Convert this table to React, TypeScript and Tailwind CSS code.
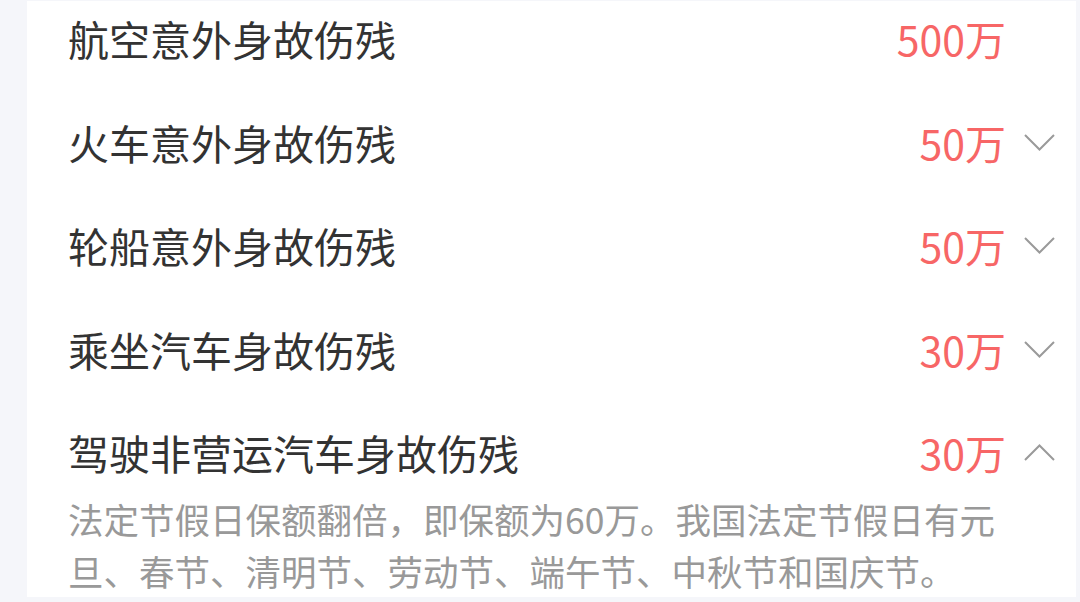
const rows = [
  { title: "航空意外身故伤残", amount: "500万", arrow: "none" },
  { title: "火车意外身故伤残", amount: "50万", arrow: "down" },
  { title: "轮船意外身故伤残", amount: "50万", arrow: "down" },
  { title: "乘坐汽车身故伤残", amount: "30万", arrow: "down" },
  { title: "驾驶非营运汽车身故伤残", amount: "30万", arrow: "up" },
];

const Chevron = ({ dir }: { dir: string }) => (
  <svg
    width="31"
    height="17"
    viewBox="0 0 31 17"
    className={dir === "none" ? "invisible" : ""}
  >
    <polyline
      points={dir === "up" ? "1,16 15.5,1.5 30,16" : "1,1 15.5,15.5 30,1"}
      fill="none"
      stroke="#9a9a9a"
      strokeWidth="2"
    />
  </svg>
);

export default function App() {
  return (
    <div
      className="h-[602px] w-[1080px] bg-[#f5f6fa] pl-[27px] pr-[4px] pt-px pb-[5px] flex"
      style={{ fontFamily: '"Noto Sans CJK SC", "Noto Sans", sans-serif' }}
    >
      <div className="flex-1 bg-white overflow-hidden pl-[41px] pr-[21px]">
        <div className="-mt-[14px] flex flex-col">
          {rows.map((r) => (
            <div key={r.title} className="h-[103.5px] flex items-center shrink-0">
              <span className="flex-1 text-[41px] text-[#333333] leading-none">
                {r.title}
              </span>
              <span className="text-[41px] text-[#f76666] leading-none mr-[18px]">
                {r.amount}
              </span>
              <Chevron dir={r.arrow} />
            </div>
          ))}
          <p className="-mt-[12px] pr-[40px] text-[35.5px] leading-[52px] text-[#999999]">
            法定节假日保额翻倍，即保额为60万。我国法定节假日有元旦、春节、清明节、劳动节、端午节、中秋节和国庆节。
          </p>
        </div>
      </div>
    </div>
  );
}
